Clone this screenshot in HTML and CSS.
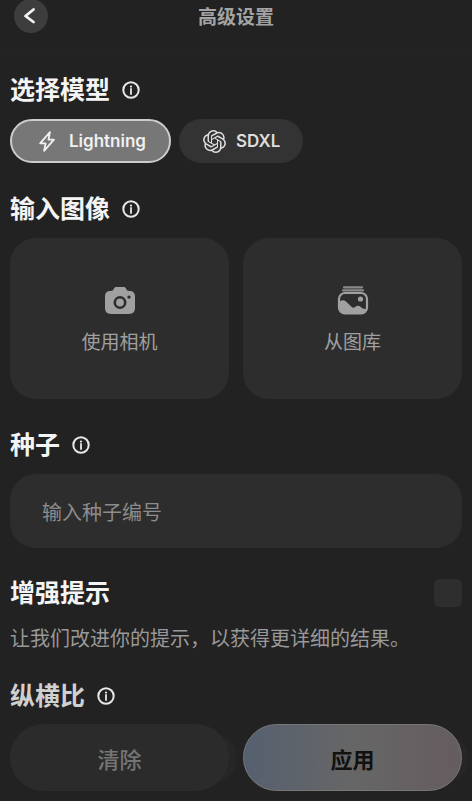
FILE: index.html
```
<!DOCTYPE html>
<html lang="zh-CN">
<head>
<meta charset="utf-8">
<meta name="viewport" content="width=device-width, initial-scale=1">
<title>高级设置</title>
<link rel="stylesheet" href="styles.css">
</head>
<body>
<svg class="sprite" aria-hidden="true">
  <symbol id="info" viewBox="0 0 20 20">
    <circle cx="10" cy="10" r="7.7" fill="none" stroke="currentColor" stroke-width="2"/>
    <circle cx="10" cy="6.6" r="1.1" fill="currentColor"/>
    <path d="M10 9v5" stroke="currentColor" stroke-width="1.8" stroke-linecap="round"/>
  </symbol>
</svg>

<header class="topbar">
  <button class="back" type="button" aria-label="返回">
    <svg viewBox="0 0 34 34" aria-hidden="true"><path d="M19.500 10.500 11.500 17l8 6" fill="none" stroke="currentColor" stroke-width="2.800" stroke-linecap="round" stroke-linejoin="round"/></svg>
  </button>
  <h1 class="title">高级设置</h1>
</header>

<main class="settings">
  <section class="group">
    <div class="heading">
      <h2>选择模型</h2>
      <button class="info" type="button" aria-label="模型说明"><svg aria-hidden="true"><use href="#info"/></svg></button>
    </div>
    <div class="models">
      <button class="model selected" type="button" aria-pressed="true">
        <svg viewBox="0 0 24 24" aria-hidden="true"><path d="M14.500 2.300 4.300 14h5.700L8.500 21.700 18.700 10H13z" fill="none" stroke="currentColor" stroke-width="1.900" stroke-linejoin="round"/></svg>
        <span>Lightning</span>
      </button>
      <button class="model" type="button" aria-pressed="false">
        <svg viewBox="0 0 24 24" aria-hidden="true"><path fill="currentColor" d="M22.2819 9.8211a5.9847 5.9847 0 0 0-.5157-4.9108 6.0462 6.0462 0 0 0-6.5098-2.9A6.0651 6.0651 0 0 0 4.9807 4.1818a5.9847 5.9847 0 0 0-3.9977 2.9 6.0462 6.0462 0 0 0 .7427 7.0966 5.98 5.98 0 0 0 .511 4.9107 6.051 6.051 0 0 0 6.5146 2.9001A5.9847 5.9847 0 0 0 13.2599 24a6.0557 6.0557 0 0 0 5.7718-4.2058 5.9894 5.9894 0 0 0 3.9977-2.9001 6.0557 6.0557 0 0 0-.7475-7.073zm-9.022 12.6081a4.4755 4.4755 0 0 1-2.8764-1.0408l.1419-.0804 4.7783-2.7582a.7948.7948 0 0 0 .3927-.6813v-6.7369l2.02 1.1686a.071.071 0 0 1 .038.052v5.5826a4.504 4.504 0 0 1-4.4945 4.4944zm-9.6607-4.1254a4.4708 4.4708 0 0 1-.5346-3.0137l.142.0852 4.783 2.7582a.7712.7712 0 0 0 .7806 0l5.8428-3.3685v2.3324a.0804.0804 0 0 1-.0332.0615L9.74 19.9502a4.4992 4.4992 0 0 1-6.1408-1.6464zM2.3408 7.8956a4.485 4.485 0 0 1 2.3655-1.9728V11.6a.7664.7664 0 0 0 .3879.6765l5.8144 3.3543-2.0201 1.1685a.0757.0757 0 0 1-.071 0l-4.8303-2.7865A4.504 4.504 0 0 1 2.3408 7.8956zm16.5963 3.8558L13.1038 8.364 15.1192 7.2a.0757.0757 0 0 1 .071 0l4.8303 2.7913a4.4944 4.4944 0 0 1-.6765 8.1042v-5.6772a.79.79 0 0 0-.407-.667zm2.0107-3.0231l-.142-.0852-4.7735-2.7818a.7759.7759 0 0 0-.7854 0L9.409 9.2297V6.8974a.0662.0662 0 0 1 .0284-.0615l4.8303-2.7866a4.4992 4.4992 0 0 1 6.6802 4.66zM8.3065 12.863l-2.02-1.1638a.0804.0804 0 0 1-.038-.0567V6.0742a4.4992 4.4992 0 0 1 7.3757-3.4537l-.142.0805L8.704 5.459a.7948.7948 0 0 0-.3927.6813zm1.0976-2.3654l2.602-1.4998 2.6069 1.4998v2.9994l-2.5974 1.4997-2.6067-1.4997Z"/></svg>
        <span>SDXL</span>
      </button>
    </div>
  </section>

  <section class="group">
    <div class="heading">
      <h2>输入图像</h2>
      <button class="info" type="button" aria-label="图像说明"><svg aria-hidden="true"><use href="#info"/></svg></button>
    </div>
    <div class="sources">
      <button class="source" type="button">
        <svg viewBox="0 0 32 32" aria-hidden="true">
          <path fill="currentColor" fill-rule="evenodd" d="M12.500 2h7c1.500 0 2 .6 2.600 1.800.8 1.700 1.400 2.200 3.300 2.200 3.800 0 5.600 2 5.600 5.600v11.200c0 4.200-2 6.200-6.200 6.200H7.200C3 29 1 27 1 22.800V11.600C1 8 2.800 6 6.600 6c1.900 0 2.500-.5 3.300-2.200C10.500 2.600 11 2 12.500 2zM16 11a6.500 6.500 0 1 0 0 13 6.500 6.500 0 0 0 0-13zm9-.6a1.700 1.700 0 1 0 0 3.400 1.700 1.700 0 0 0 0-3.400z"/>
          <circle cx="16" cy="17.500" r="3.900" fill="currentColor"/>
        </svg>
        <span>使用相机</span>
      </button>
      <button class="source" type="button">
        <svg viewBox="0 0 32 32" aria-hidden="true">
          <path d="M7 2.300h18M6 5.300h20" stroke="currentColor" stroke-width="2.300" stroke-linecap="round" opacity=".8"/>
          <rect x="2" y="8" width="28" height="20.500" rx="6" fill="none" stroke="currentColor" stroke-width="2.200"/>
          <path fill="currentColor" d="M2 17.500c2-2.600 4.500-3.200 7-1l5.500 5.300c1.300 1.200 2.400 1.200 3.600.2 2-1.700 4-1.600 5.700-.1 1.900 1.700 3.400 2.200 6.200 2-.5 3-2.500 4.600-6 4.600H8c-4 0-6-2-6-6z"/>
          <circle cx="23.500" cy="14" r="2.600" fill="currentColor"/>
        </svg>
        <span>从图库</span>
      </button>
    </div>
  </section>

  <section class="group">
    <div class="heading">
      <h2><label for="seed">种子</label></h2>
      <button class="info" type="button" aria-label="种子说明"><svg aria-hidden="true"><use href="#info"/></svg></button>
    </div>
    <input class="seed" id="seed" type="text" inputmode="numeric" placeholder="输入种子编号">
  </section>

  <section class="group enhance">
    <div class="heading spread">
      <h2><label for="enhance">增强提示</label></h2>
      <input class="check" id="enhance" type="checkbox">
    </div>
    <p class="note">让我们改进你的提示，以获得更详细的结果。</p>
  </section>

  <section class="group ratio">
    <div class="heading">
      <h2>纵横比</h2>
      <button class="info" type="button" aria-label="纵横比说明"><svg aria-hidden="true"><use href="#info"/></svg></button>
    </div>
  </section>
</main>

<footer class="actions">
  <button class="action clear" type="button">清除</button>
  <button class="action apply" type="button">应用</button>
</footer>
</body>
</html>
```
FILE: styles.css
```
* {
  box-sizing: border-box;
}

body {
  margin: 0;
  background: #222;
  color: #f4f4f4;
  font-family: Inter, "Noto Sans CJK SC", sans-serif;
  overflow-x: hidden;
}

button,
input {
  margin: 0;
  padding: 0;
  border: 0;
  font: inherit;
  color: inherit;
}

h1,
h2,
p {
  margin: 0;
}

svg {
  display: block;
}

.sprite {
  position: absolute;
  width: 0;
  height: 0;
}

.topbar {
  display: grid;
  grid-template-columns: 34px 1fr 34px;
  align-items: start;
  height: 52px;
  padding: 0 14px;
  border-bottom: 1px solid #252525;
}

.back {
  height: 34px;
  margin-top: -1px;
  border-radius: 50%;
  background: #3d3d3d;
}

.title {
  color: #a4a4a4;
  font-size: 19px;
  font-weight: 700;
  line-height: 35px;
  text-align: center;
}

.settings {
  display: flex;
  flex-direction: column;
  gap: 32px;
  padding: 24px 10px 14px;
}

.group {
  display: flex;
  flex-direction: column;
  gap: 15px;
}

.heading {
  display: flex;
  align-items: center;
  gap: 11px;
  height: 28px;
}

.heading h2 {
  font-size: 25px;
  font-weight: 700;
  line-height: 28px;
}

.spread {
  justify-content: space-between;
}

.info {
  background: none;
  color: #e8e8e8;
}

.info svg {
  width: 20px;
  height: 20px;
}

.models {
  display: flex;
  gap: 8px;
}

.model {
  display: flex;
  align-items: center;
  gap: 10px;
  height: 44px;
  padding: 0 23px 0 24px;
  border-radius: 22px;
  background: #333;
  color: #ddd;
  font-size: 17px;
  font-weight: 600;
}

.model svg {
  width: 23px;
  height: 23px;
}

.selected {
  border: 2px solid #ccc;
  background: #777;
  color: #f0f0f0;
}

.sources,
.actions {
  display: grid;
  grid-template-columns: 1fr 1fr;
  gap: 14px;
}

.source {
  display: flex;
  flex-direction: column;
  align-items: center;
  justify-content: center;
  gap: 12px;
  height: 161px;
  padding-top: 4px;
  border-radius: 26px;
  background: #2d2d2d;
  color: #a0a0a0;
  font-size: 19px;
  line-height: 28px;
}

.source svg {
  width: 32px;
  height: 32px;
}

.seed {
  width: 100%;
  height: 74px;
  padding: 4px 32px 0;
  border-radius: 26px;
  background: #2d2d2d;
  font-size: 20px;
}

.seed::placeholder {
  color: #8c8c8c;
  opacity: 1;
}

.check {
  width: 28px;
  height: 28px;
  border-radius: 6px;
  background: #2e2e2e;
  appearance: none;
}

.check:checked {
  background: #999;
}

.note {
  color: #999;
  font-size: 20px;
  line-height: 34px;
}

.ratio {
  color: #d0d0d0;
}

.enhance {
  margin: -1px 0 -6px;
}

.actions {
  padding: 0 10px 10px;
}

.action {
  position: relative;
  height: 67px;
  border-radius: 34px;
  font-size: 22px;
  font-weight: 700;
}

.action::before {
  content: "";
  position: absolute;
  z-index: -1;
  inset: 10px -8px 8px 40px;
  border-radius: 24px;
  background: #262626;
}

.clear {
  background: #2b2b2b;
  color: #757575;
  font-weight: 500;
}

.apply {
  border: 1px solid #777;
  background: linear-gradient(90deg, #566070, #666 50%, #655c5e);
  color: #111;
}
```
